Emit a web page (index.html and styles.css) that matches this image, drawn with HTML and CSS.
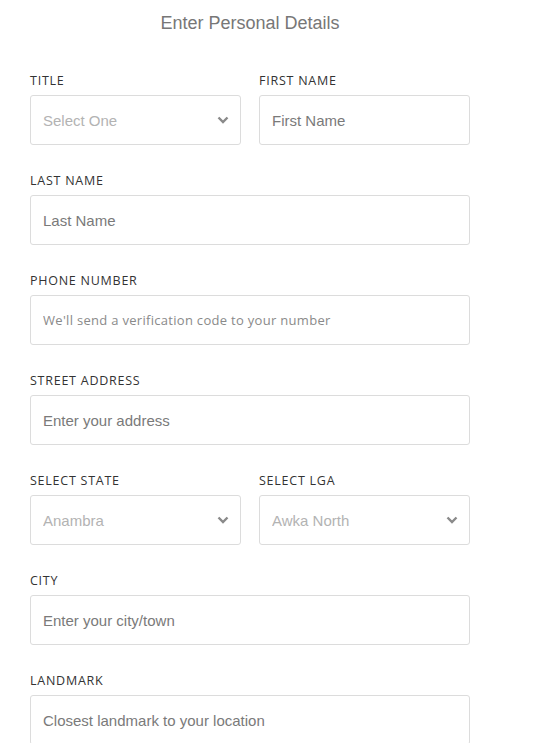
FILE: index.html
```html
<!DOCTYPE html>
<html lang="en">
<head>
<meta charset="utf-8">
<title>Enter Personal Details</title>
<link rel="stylesheet" href="styles.css">
</head>
<body>
<form class="form">
  <h1 class="heading">Enter Personal Details</h1>

  <div class="row two">
    <label class="field">
      <span class="label">Title</span>
      <span class="select-wrap">
        <select class="control select"><option>Select One</option></select>
        <svg class="chev" width="12" height="8" viewBox="0 0 12 8"><path d="M1.5 1.5 L6 6 L10.5 1.5" fill="none" stroke="#8a8a8a" stroke-width="2.4"/></svg>
      </span>
    </label>
    <label class="field">
      <span class="label">First Name</span>
      <input class="control" type="text" placeholder="First Name">
    </label>
  </div>

  <label class="field">
    <span class="label">Last Name</span>
    <input class="control" type="text" placeholder="Last Name">
  </label>

  <label class="field">
    <span class="label">Phone Number</span>
    <input class="control phone" type="text" placeholder="We'll send a verification code to your number">
  </label>

  <label class="field">
    <span class="label">Street Address</span>
    <input class="control" type="text" placeholder="Enter your address">
  </label>

  <div class="row two">
    <label class="field">
      <span class="label">Select State</span>
      <span class="select-wrap">
        <select class="control select"><option>Anambra</option></select>
        <svg class="chev" width="12" height="8" viewBox="0 0 12 8"><path d="M1.5 1.5 L6 6 L10.5 1.5" fill="none" stroke="#8a8a8a" stroke-width="2.4"/></svg>
      </span>
    </label>
    <label class="field">
      <span class="label">Select LGA</span>
      <span class="select-wrap">
        <select class="control select"><option>Awka North</option></select>
        <svg class="chev" width="12" height="8" viewBox="0 0 12 8"><path d="M1.5 1.5 L6 6 L10.5 1.5" fill="none" stroke="#8a8a8a" stroke-width="2.4"/></svg>
      </span>
    </label>
  </div>

  <label class="field">
    <span class="label">City</span>
    <input class="control" type="text" placeholder="Enter your city/town">
  </label>

  <label class="field">
    <span class="label">Landmark</span>
    <input class="control" type="text" placeholder="Closest landmark to your location">
  </label>
</form>
</body>
</html>
```
FILE: styles.css
```css
html, body {
  margin: 0;
  padding: 0;
  background: #fff;
}
body {
  font-family: "Liberation Sans", Arial, sans-serif;
  overflow: hidden;
}
.form {
  width: 440px;
  margin-left: 30px;
  display: flex;
  flex-direction: column;
  gap: 27px;
}
.heading {
  margin: 11px 0 10px;
  font-size: 18px;
  line-height: 24px;
  font-weight: normal;
  color: #777;
  text-align: center;
}
.row.two {
  display: grid;
  grid-template-columns: 211px 211px;
  column-gap: 18px;
}
.field {
  display: flex;
  flex-direction: column;
}
.label {
  font-family: "Open Sans", sans-serif;
  font-size: 12.5px;
  line-height: 16px;
  letter-spacing: 0.75px;
  text-transform: uppercase;
  color: #333;
  padding-top: 1px;
  margin-bottom: 6px;
}
.control {
  box-sizing: border-box;
  width: 100%;
  height: 50px;
  margin: 0;
  border: 1px solid #dcdcdc;
  border-radius: 3px;
  padding: 0 12px;
  font-family: "Liberation Sans", Arial, sans-serif;
  font-size: 15px;
  color: #555;
  background: #fff;
  outline: none;
}
.control::placeholder {
  color: #7a7a7a;
  opacity: 1;
}
.control.phone {
  font-family: "Open Sans", sans-serif;
  font-size: 13px;
  letter-spacing: 0.3px;
}
.control.phone::placeholder {
  color: #8a8a8a;
}
.select-wrap {
  position: relative;
  display: block;
}
.select {
  appearance: none;
  -webkit-appearance: none;
  color: #b3b3b3;
}
.chev {
  position: absolute;
  right: 12px;
  top: 21px;
  pointer-events: none;
}
```
